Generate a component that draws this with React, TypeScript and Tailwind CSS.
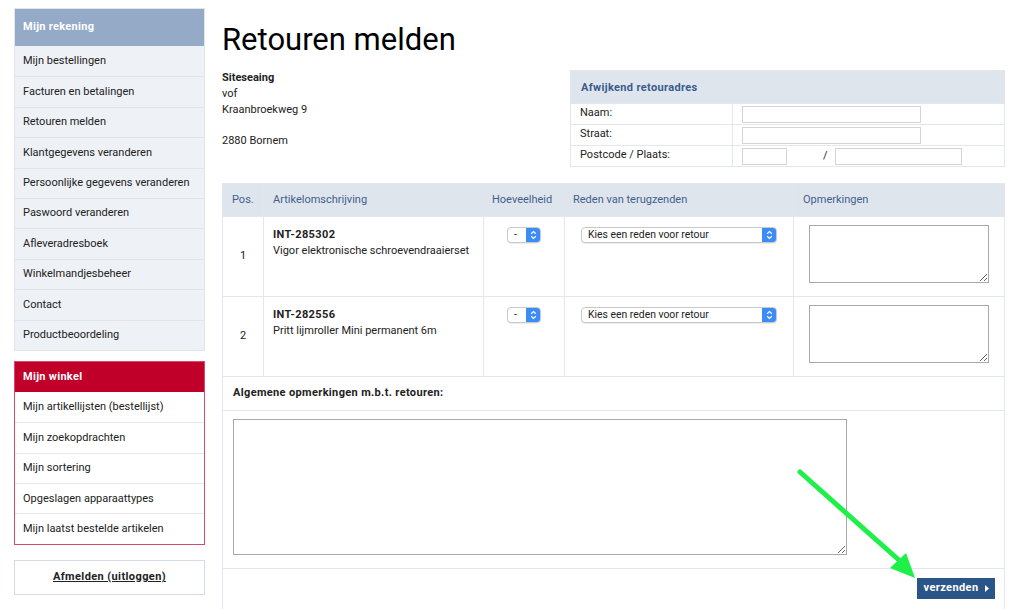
import React from "react";

const accountLinks = [
  "Mijn bestellingen",
  "Facturen en betalingen",
  "Retouren melden",
  "Klantgegevens veranderen",
  "Persoonlijke gegevens veranderen",
  "Paswoord veranderen",
  "Afleveradresboek",
  "Winkelmandjesbeheer",
  "Contact",
  "Productbeoordeling",
];

const shopLinks = [
  "Mijn artikellijsten (bestellijst)",
  "Mijn zoekopdrachten",
  "Mijn sortering",
  "Opgeslagen apparaattypes",
  "Mijn laatst bestelde artikelen",
];

const items = [
  { pos: 1, code: "INT-285302", name: "Vigor elektronische schroevendraaierset" },
  { pos: 2, code: "INT-282556", name: "Pritt lijmroller Mini permanent 6m" },
];

function Stepper() {
  return (
    <span className="flex h-full w-[14px] items-center justify-center rounded-r-[3px] bg-[#3b8cf5]">
      <svg width="7" height="10" viewBox="0 0 7 10" fill="none" stroke="white" strokeWidth="1.2">
        <path d="M1.2 3.8 3.5 1.6 5.8 3.8" />
        <path d="M1.2 6.2 3.5 8.4 5.8 6.2" />
      </svg>
    </span>
  );
}

function FakeSelect({ label, width }: { label: string; width: string }) {
  return (
    <div
      className={`flex h-[16px] ${width} items-center justify-between rounded-[4px] border border-[#c9c9c9] bg-white shadow-[0_1px_1px_rgba(0,0,0,0.08)]`}
    >
      <span className="pl-[6px] text-[10.4px] leading-none text-[#222]">{label}</span>
      <Stepper />
    </div>
  );
}

export default function App() {
  return (
    <div className="relative flex h-[609px] w-[1024px] gap-[17px] overflow-hidden bg-white pl-[14px] pt-[8px] font-['Roboto',sans-serif] text-[#222]">
      {/* Sidebar */}
      <aside className="flex w-[191px] shrink-0 flex-col">
        <div className="border border-[#e1e5eb]">
          <div className="flex h-[37px] items-center bg-[#94aac6] px-[8px] text-[11px] font-bold tracking-[0.3px] text-white">
            Mijn rekening
          </div>
          {accountLinks.map((l, i) => (
            <div
              key={l}
              className={`flex h-[30.4px] items-center bg-[#eef1f6] px-[8px] text-[11px] ${i > 0 ? "border-t border-[#dfe3ea]" : ""}`}
            >
              {l}
            </div>
          ))}
        </div>

        <div className="mt-[10px] border border-[#d64a6c]">
          <div className="flex h-[30px] items-center bg-[#c00029] px-[8px] text-[11px] font-bold tracking-[0.3px] text-white">
            Mijn winkel
          </div>
          {shopLinks.map((l, i) => (
            <div
              key={l}
              className={`flex h-[30.4px] items-center bg-white px-[8px] text-[11px] ${i > 0 ? "border-t border-[#e8e8ea]" : ""}`}
            >
              {l}
            </div>
          ))}
        </div>

        <div className="mt-[15px] flex h-[35px] items-center justify-center border border-[#d3dbe6] text-[11px] font-bold tracking-[0.4px] underline">
          Afmelden (uitloggen)
        </div>
      </aside>

      {/* Main */}
      <main className="flex w-[783px] flex-col">
        <h1 className="mt-[14px] text-[31px] leading-[36px] text-black">Retouren melden</h1>

        <div className="mt-[12px] flex items-start justify-between">
          <div className="text-[11px] leading-[15.8px]">
            <div className="font-bold">Siteseaing</div>
            <div>vof</div>
            <div>Kraanbroekweg 9</div>
            <div className="h-[15.8px]" />
            <div>2880 Bornem</div>
          </div>

          <table className="w-[435px] border-collapse text-[11px]">
            <thead>
              <tr>
                <th
                  colSpan={2}
                  className="h-[33px] border border-[#e3e6ea] bg-[#dfe5ec] px-[10px] pt-[2px] text-left text-[11px] font-bold tracking-[0.35px] text-[#3a5b8c]"
                >
                  Afwijkend retouradres
                </th>
              </tr>
            </thead>
            <tbody>
              <tr className="h-[21px]">
                <td className="w-[162px] border border-[#e3e6ea] px-[9px] pt-[1px] align-top leading-[15px]">Naam:</td>
                <td className="border border-[#e3e6ea] pl-[9px]">
                  <div className="h-[17px] w-[179px] border border-[#d4d4d4]" />
                </td>
              </tr>
              <tr className="h-[21px]">
                <td className="border border-[#e3e6ea] px-[9px] pt-[1px] align-top leading-[15px]">Straat:</td>
                <td className="border border-[#e3e6ea] pl-[9px]">
                  <div className="h-[17px] w-[179px] border border-[#d4d4d4]" />
                </td>
              </tr>
              <tr className="h-[21px]">
                <td className="border border-[#e3e6ea] px-[9px] pt-[1px] align-top leading-[15px]">Postcode / Plaats:</td>
                <td className="border border-[#e3e6ea] pl-[9px]">
                  <div className="flex items-center">
                    <div className="h-[17px] w-[45px] border border-[#d4d4d4]" />
                    <span className="ml-[36px] w-[12px]">/</span>
                    <div className="h-[17px] w-[127px] border border-[#d4d4d4]" />
                  </div>
                </td>
              </tr>
            </tbody>
          </table>
        </div>

        <table className="mt-[16px] w-[783px] border-collapse text-[11px]">
          <thead>
            <tr className="h-[33px] bg-[#dfe5ec] text-left text-[11px] font-normal text-[#3f5f8f]">
              <th className="w-[41px] border border-[#e3e6ea] px-[9px] font-normal">Pos.</th>
              <th className="w-[220px] border border-[#e3e6ea] px-[9px] font-normal">Artikelomschrijving</th>
              <th className="w-[81px] border border-[#e3e6ea] px-[8px] font-normal">Hoeveelheid</th>
              <th className="w-[229px] border border-[#e3e6ea] px-[8px] font-normal">Reden van terugzenden</th>
              <th className="border border-[#e3e6ea] px-[9px] font-normal">Opmerkingen</th>
            </tr>
          </thead>
          <tbody>
            {items.map((it) => (
              <tr key={it.code} className="h-[80px]">
                <td className="border border-[#e3e6ea] text-center align-middle">{it.pos}</td>
                <td className="border border-[#e3e6ea] px-[9px] pt-[10px] align-top">
                  <div className="text-[11px] font-bold leading-[16px] tracking-[0.4px]">{it.code}</div>
                  <div className="leading-[16px]">{it.name}</div>
                </td>
                <td className="border border-[#e3e6ea] pt-[10px] align-top">
                  <div className="flex justify-center">
                    <FakeSelect label="-" width="w-[34px]" />
                  </div>
                </td>
                <td className="border border-[#e3e6ea] pt-[10px] align-top">
                  <div className="flex justify-center">
                    <FakeSelect label="Kies een reden voor retour" width="w-[196px]" />
                  </div>
                </td>
                <td className="border border-[#e3e6ea] pt-[8px] align-top">
                  <div className="flex justify-center">
                    <textarea className="h-[58px] w-[180px] border border-[#a9a9a9] bg-white" />
                  </div>
                </td>
              </tr>
            ))}
            <tr className="h-[34px]">
              <td
                colSpan={5}
                className="border border-[#e3e6ea] px-[10px] text-[11px] font-bold tracking-[0.35px]"
              >
                Algemene opmerkingen m.b.t. retouren:
              </td>
            </tr>
            <tr className="h-[158px]">
              <td colSpan={5} className="border border-[#e3e6ea] pl-[10px] pt-[8px] align-top">
                <textarea className="block h-[136px] w-[614px] border border-[#a9a9a9] bg-white" />
              </td>
            </tr>
            <tr className="h-[50px]">
              <td colSpan={5} className="border border-[#e3e6ea] pr-[9px] pt-[9px] text-right align-top">
                <button className="inline-flex h-[21px] w-[78px] items-center justify-center gap-[6px] bg-[#2a5589] text-[11px] font-bold tracking-[0.4px] text-white">
                  verzenden
                  <svg width="4" height="7" viewBox="0 0 4 7">
                    <path d="M0 0 4 3.5 0 7Z" fill="white" />
                  </svg>
                </button>
              </td>
            </tr>
          </tbody>
        </table>
      </main>

      {/* Annotation arrow */}
      <svg
        className="pointer-events-none absolute left-0 top-0"
        width="1024"
        height="609"
        viewBox="0 0 1024 609"
      >
        <line x1="800" y1="472" x2="900" y2="561" stroke="#1ef04a" strokeWidth="5" strokeLinecap="round" />
        <polygon points="915,578 890,568 906,553" fill="#1ef04a" />
      </svg>
    </div>
  );
}
